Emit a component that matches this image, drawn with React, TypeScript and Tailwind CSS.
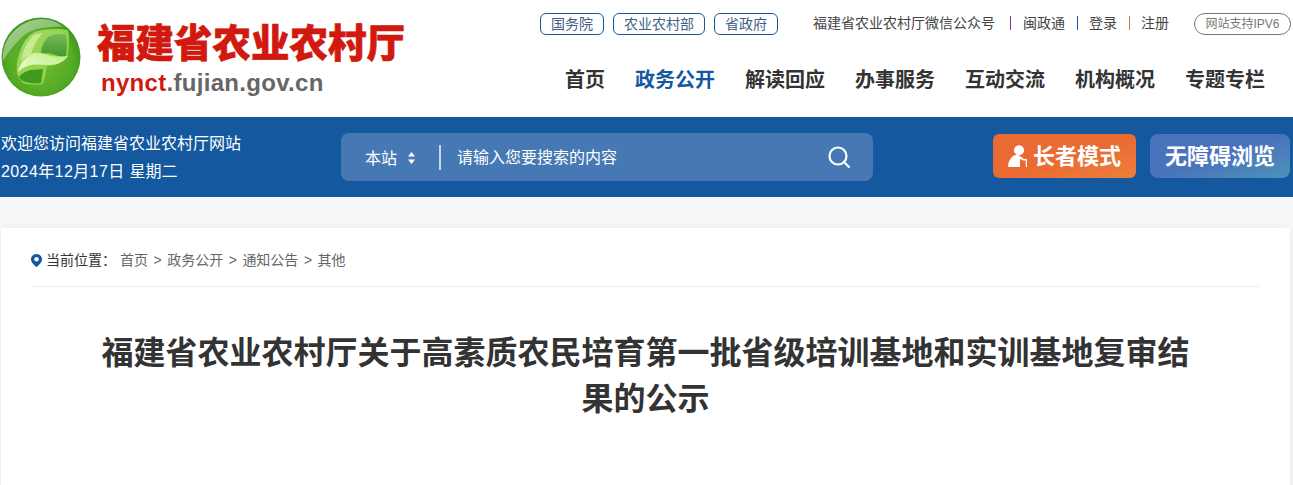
const FONT = "font-['Liberation_Sans','Noto_Sans_CJK_SC',sans-serif]";

const NAV = ["首页", "政务公开", "解读回应", "办事服务", "互动交流", "机构概况", "专题专栏"];
const CRUMBS = ["首页", "政务公开", "通知公告", "其他"];

function Logo() {
  return (
    <svg width="80" height="80" viewBox="0 0 80 80" className="shrink-0">
      <defs>
        <radialGradient id="ball" cx="50%" cy="55%" r="55%">
          <stop offset="0%" stopColor="#6fbc34" />
          <stop offset="75%" stopColor="#55aa24" />
          <stop offset="100%" stopColor="#3a9420" />
        </radialGradient>
        <linearGradient id="gloss" x1="0" y1="0" x2="1" y2="1">
          <stop offset="0%" stopColor="#a9cf98" />
          <stop offset="100%" stopColor="#6fb84a" />
        </linearGradient>
        <linearGradient id="frame" x1="0" y1="0" x2="1" y2="1">
          <stop offset="0%" stopColor="#a4d86a" />
          <stop offset="100%" stopColor="#86cf34" />
        </linearGradient>
        <linearGradient id="hole" x1="0" y1="0" x2="0" y2="1">
          <stop offset="0%" stopColor="#79b85c" />
          <stop offset="100%" stopColor="#3f9a28" />
        </linearGradient>
        <linearGradient id="leaf" x1="0" y1="1" x2="1" y2="0">
          <stop offset="0%" stopColor="#f0fbd8" />
          <stop offset="100%" stopColor="#b8ee80" />
        </linearGradient>
      </defs>
      <circle cx="40" cy="40" r="39.5" fill="url(#ball)" />
      <path d="M2 44C0 22 18 3 40 2c9 0 17 3 22 8-18-1-34 2-43 12C12 29 6 37 2 44z" fill="url(#gloss)" />
      <path
        d="M16 56C15 47 17 39 20 32c3-8 8-15 16-18 10-2 22-3 30-1 3 1 2 18 1 26-5 7-13 10-21 10-1 6-2 12-4 18-8 1-15 1-20-1-3-3-5-6-6-10z"
        fill="url(#frame)"
      />
      <path d="M20 44c1-9 6-20 13-26 3-1 6-2 9-2-6 6-10 13-12 22-4 1-7 3-10 6z" fill="#c7ea92" />
      <path d="M47 20c5-3 13-4 18-2 1 7 1 15 0 21-3 1-9 0-13-2-4-1-8-1-12 0 0-7 3-13 7-17z" fill="url(#hole)" />
      <path d="M18 60c3-4 7-6 12-7 5 0 9-1 12-1l-2 14c-7 1-13 0-18-2-2-1-3-2-4-4z" fill="#3f9a20" />
      <path d="M17 55c2-9 8-16 16-19 6-1 11 1 17 3 6 1 12 1 17 0-4 6-11 9-19 9-6 0-12-1-18 0-5 1-9 3-13 7z" fill="url(#leaf)" />
    </svg>
  );
}

function ElderIcon() {
  return (
    <svg width="19" height="22" viewBox="0 0 19 22" fill="white" className="shrink-0">
      <circle cx="11" cy="5.300" r="5" />
      <path d="M0 22c0-5 2-8 4-10 2-2 5-2.500 7-1.500l5 3.500h3V22h-1.200v-6.500h-2.300L12 14v8z" />
    </svg>
  );
}

function SearchIcon() {
  return (
    <svg width="22" height="22" viewBox="0 0 22 22" fill="none" stroke="white" strokeWidth="2.200" className="shrink-0">
      <circle cx="10" cy="10" r="8.500" />
      <path d="M16 16l5 5" strokeLinecap="round" />
    </svg>
  );
}

function PinIcon() {
  return (
    <svg width="11" height="13" viewBox="0 0 11 13" className="shrink-0">
      <path
        fillRule="evenodd"
        d="M5.500 0C2.500 0 0 2.300 0 5.200 0 8.500 3.500 11.500 5.500 13 7.500 11.500 11 8.500 11 5.200 11 2.300 8.500 0 5.500 0zm0 3a2.300 2.300 0 1 1 0 4.600 2.300 2.300 0 0 1 0-4.600z"
        fill="#14589f"
      />
    </svg>
  );
}

function TopLink({ label }: { label: string }) {
  return (
    <a className="h-[22px] leading-[20px] px-[10px] border border-[#14589f] rounded-[6px] text-[14px] text-[#3f5f86]">
      {label}
    </a>
  );
}

export default function App() {
  return (
    <div className={`${FONT} w-[1293px] h-[485px] overflow-hidden bg-white`}>
      {/* Header */}
      <header className="h-[117px] flex pl-px">
        <div className="flex items-start pt-[17px]">
          <Logo />
          <div className="ml-4">
            <div className="text-[38.500px] leading-[46px] mt-[4px] font-black text-[#d2190f] whitespace-nowrap [-webkit-text-stroke:0.6px_#d2190f]">
              福建省农业农村厅
            </div>
            <div className="text-[24px] leading-[28px] mt-[2px] ml-1 font-bold text-[#666] tracking-[0.3px]">
              <span className="text-[#d2190f]">nynct</span>.fujian.gov.cn
            </div>
          </div>
        </div>

        <div className="flex-1 pl-[135px]">
          <div className="flex items-center mt-[13px] h-[22px]">
            <div className="flex gap-[9px]">
              <TopLink label="国务院" />
              <TopLink label="农业农村部" />
              <TopLink label="省政府" />
            </div>
            <div className="flex items-center mb-[2px] text-[14px] text-[#444]">
              <span className="ml-[35px]">福建省农业农村厅微信公众号</span>
              <span className="ml-[15px] w-px h-[14px] bg-[#7a3a8a]" />
              <span className="ml-[12px]">闽政通</span>
              <span className="ml-[12px] w-px h-[14px] bg-[#14589f]" />
              <span className="ml-[11px]">登录</span>
              <span className="ml-[12px] w-px h-[14px] bg-[#b8863a]" />
              <span className="ml-[11px]">注册</span>
            </div>
            <span className="ml-[25px] h-[22px] leading-[20px] w-[97px] text-center border border-[#777] rounded-[11px] text-[12px] text-[#777]">
              网站支持IPV6
            </span>
          </div>
          <nav className="flex gap-[30px] mt-[31px] pl-[25px] text-[20px] leading-[28px] font-bold text-[#333]">
            {NAV.map((n) => (
              <a key={n} className={n === "政务公开" ? "text-[#14589f]" : ""}>
                {n}
              </a>
            ))}
          </nav>
        </div>
      </header>

      {/* Blue bar */}
      <div className="h-[80px] bg-[#14589f] flex items-center pl-px text-white">
        <div className="w-[340px] pt-[2px] text-[16px] leading-[28px]">
          <div>欢迎您访问福建省农业农村厅网站</div>
          <div>
            <span className="tracking-[0.4px]">2024年12月17日 </span>星期二
          </div>
        </div>
        <div className="w-[532px] h-[48px] bg-[#4679b3] rounded-[8px] flex items-center pl-6 pr-[23px] text-[16px]">
          <span className="pt-[3px]">本站</span>
          <svg width="9" height="12" viewBox="0 0 9 12" fill="white" className="ml-[10px] mt-px shrink-0">
            <path d="M4.500 0L8 4.500H1zM4.500 12L1 7.500h7z" />
          </svg>
          <span className="ml-[23px] w-0.5 h-[25px] bg-white/70" />
          <span className="ml-[16px] pt-px flex-1">请输入您要搜索的内容</span>
          <SearchIcon />
        </div>
        <a className="ml-[120px] mb-[2px] w-[143px] h-[44px] rounded-[6px] bg-gradient-to-br from-[#e96a32] via-[#e96a32] to-[#ee7f3c] flex items-center justify-center gap-[6px] text-[22px] font-bold">
          <ElderIcon />
          长者模式
        </a>
        <a className="ml-[14px] mb-[2px] w-[140px] h-[44px] rounded-[8px] bg-gradient-to-br from-[#4a73bd] via-[#4a73bd] to-[#4b93b6] flex items-center justify-center text-[22px] font-bold">
          无障碍浏览
        </a>
      </div>

      {/* Article card */}
      <div className="bg-[#f8f8f8] pt-[31px] pl-px">
        <div className="bg-white w-[1289px] h-[300px] px-[30px] shadow-[0_0_8px_rgba(0,0,0,0.07)]">
          <div className="h-[59px] pt-[7px] flex items-center border-b border-[#eee] text-[14px]">
            <PinIcon />
            <span className="ml-[4px] text-[#333]">当前位置：</span>
            <div className="ml-[4px] flex gap-[5.500px] text-[#666]">
              {CRUMBS.map((c, i) => (
                <span key={c} className="flex gap-[5.500px]">
                  {i > 0 && <span>&gt;</span>}
                  {c}
                </span>
              ))}
            </div>
          </div>
          <h1 className="mt-[43px] mx-auto w-[1100px] text-center text-[32px] leading-[46px] font-bold text-[#333]">
            福建省农业农村厅关于高素质农民培育第一批省级培训基地和实训基地复审结果的公示
          </h1>
        </div>
      </div>
    </div>
  );
}
